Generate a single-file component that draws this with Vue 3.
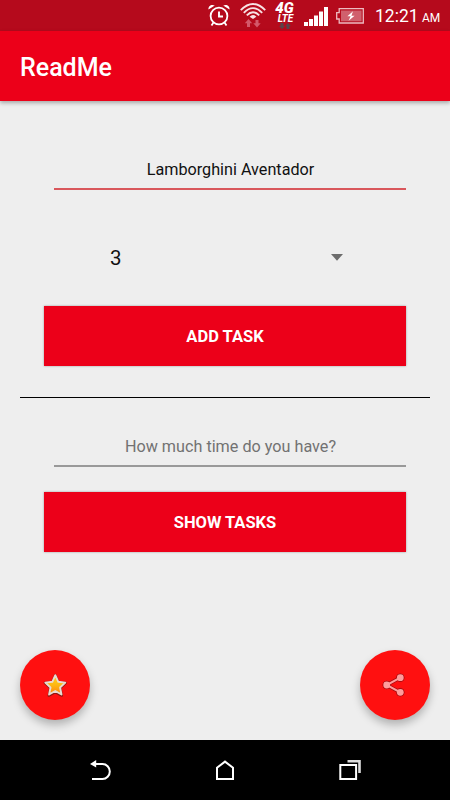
<template>
  <div class="screen">
    <!-- Status Bar -->
    <header class="status-bar">
      <svg class="alarm-icon" width="22" height="24" viewBox="0 0 22 24" fill="none" stroke="#fff">
        <circle cx="11" cy="13" r="8.4" stroke-width="1.8" />
        <path d="M11 8.500v5h4" stroke-width="1.900" />
        <path d="M.500 6.500C0 3 3.500 1 6.800 2.600zM21.500 6.500C22 3 18.500 1 15.200 2.600z" fill="#fff" stroke="none" />
        <path d="M5.500 19.500L3.500 22.500M16.500 19.500L18.500 22.500" stroke-width="1.800" />
      </svg>
      <svg class="wifi-icon" width="26" height="26" viewBox="0 0 26 26" fill="none" stroke="#f8e2e4" stroke-width="1.900">
        <path d="M.800 8.200Q13-4.200 25.200 8.200" />
        <path d="M3.800 10.800Q13 1.400 22.200 10.800" />
        <path d="M6.800 13.400Q13 7 19.200 13.400" />
        <path d="M9.600 14.800Q13 11.400 16.400 14.800L13 17z" fill="#f8e2e4" stroke="none" />
        <path d="M8.500 17l-3.700 4.300h2.200v3.700h3v-3.700h2.200zM17 25.500l-3.700-4.300h2.200V18h3v3.200h2.200z" fill="#d4586a" stroke="none" />
      </svg>
      <div class="network">
        <span class="network-gen">4G</span>
        <span class="network-type">LTE</span>
        <svg width="12" height="6" viewBox="0 0 12 6" fill="#5a4248">
          <path d="M3 6L0 3h1.500V0h3v3H6zM9 0L6 3h1.500v3h3V3H12z" />
        </svg>
      </div>
      <svg class="signal-icon" width="24" height="19" viewBox="0 0 24 19" fill="#fff">
        <rect x="0" y="15" width="4" height="4" />
        <rect x="5" y="12" width="4" height="7" />
        <rect x="10" y="8.500" width="4" height="10.500" />
        <rect x="15" y="4.500" width="4" height="14.500" />
        <rect x="20" y="0" width="4" height="19" />
      </svg>
      <svg class="battery-icon" width="28" height="16" viewBox="0 0 28 16">
        <path d="M3.200.700H27.300V15H3.200V11H.700V4.700H3.200z" fill="none" stroke="#edbac0" stroke-width="1.300" />
        <rect x="5" y="2.500" width="20.600" height="10.800" fill="#d0606d" />
        <path d="M17 3.200l-5.600 5h3.200L12.600 12.800l6-5h-3.200z" fill="#fff" />
      </svg>
      <span class="clock">12:21</span>
      <span class="meridiem">AM</span>
    </header>

    <!-- App Bar -->
    <div class="app-bar">
      <h1>ReadMe</h1>
    </div>

    <!-- Task Form -->
    <main class="content">
      <input v-model="taskName" class="field field-task" type="text" />

      <div class="spinner">
        <span>{{ duration }}</span>
        <svg width="12" height="7" viewBox="0 0 12 7">
          <path d="M0 0h12L6 6.800z" fill="#6c6c6c" />
        </svg>
      </div>

      <button class="btn">ADD TASK</button>

      <div class="divider"></div>

      <input v-model="timeAvailable" class="field field-time" type="text" placeholder="How much time do you have?" />

      <button class="btn">SHOW TASKS</button>

      <!-- Floating Actions -->
      <div class="fab-row">
        <button class="fab" aria-label="Favourite">
          <svg width="26" height="26" viewBox="0 0 26 26">
            <defs>
              <linearGradient id="star-fill" x1="0" y1="0" x2="0" y2="1">
                <stop offset="0" stop-color="#ffd21c" />
                <stop offset="0.500" stop-color="#fdb913" />
                <stop offset="1" stop-color="#ff8010" />
              </linearGradient>
            </defs>
            <path d="M13.300 3.200l3.100 6.800 7.400.900-5.400 5.100 1.400 7.600-6.500-3.500-6.500 3.500 1.400-7.600-5.400-5.100 7.400-.900z" fill="#7d1a14" stroke="#8f1712" stroke-width="2.400" stroke-linejoin="round" />
            <path d="M13.300 3.200l3 6.600 7 .800-5.200 4.900 1.400 7-6.200-3.500-6.200 3.500 1.400-7-5.200-4.900 7-.800z" fill="url(#star-fill)" stroke="#e8dcd2" stroke-width="1.900" stroke-linejoin="round" />
          </svg>
        </button>
        <button class="fab" aria-label="Share">
          <svg width="26" height="26" viewBox="0 0 26 26">
            <g fill="#a50c10" stroke="#a50c10">
              <path d="M18.300 5.700L4.700 13l13.600 7.300" fill="none" stroke-width="3.600" />
              <circle cx="18.300" cy="5.700" r="3.800" />
              <circle cx="4.700" cy="13" r="3.800" />
              <circle cx="18.300" cy="20.300" r="3.800" />
            </g>
            <g fill="#ff9c9c">
              <path d="M18.300 5.700L4.700 13l13.600 7.300" fill="none" stroke="#ff9c9c" stroke-width="2" />
              <circle cx="18.300" cy="5.700" r="3.400" />
              <circle cx="4.700" cy="13" r="3.400" />
              <circle cx="18.300" cy="20.300" r="3.400" />
            </g>
          </svg>
        </button>
      </div>
    </main>

    <!-- Navigation Bar -->
    <nav class="nav-bar">
      <svg width="22" height="20" viewBox="0 0 22 20" fill="none" stroke="#fff" stroke-width="2">
        <path d="M6 4h7.500a7.300 7.500 0 0 1 0 15H3" />
        <path d="M1 4L7.200 0v7.500z" fill="#fff" stroke="none" />
      </svg>
      <svg width="20" height="20" viewBox="0 0 20 20" fill="none" stroke="#fff" stroke-width="2">
        <path d="M2 19V7.800l8-6.200 8 6.200V19z" />
      </svg>
      <svg width="22" height="20" viewBox="0 0 22 20" fill="none" stroke="#fff" stroke-width="2">
        <rect x="1.300" y="5" width="15.800" height="14" />
        <path d="M8.500 1.300h12V13" stroke="#ddd" stroke-width="2.600" />
      </svg>
    </nav>
  </div>
</template>

<script setup>
import { ref } from 'vue'

const taskName = ref('Lamborghini Aventador')
const duration = ref(3)
const timeAvailable = ref('')
</script>

<style>
body {
  margin: 0;
}
</style>

<style scoped>
.screen {
  width: 450px;
  height: 800px;
  display: flex;
  flex-direction: column;
  overflow: hidden;
  background-color: #eee;
  font-family: Roboto, sans-serif;
}

/* Status Bar */
.status-bar {
  height: 31px;
  flex-shrink: 0;
  box-sizing: border-box;
  padding-left: 208px;
  display: flex;
  align-items: flex-start;
  background-color: #b50a1c;
  color: #fff;
}

.alarm-icon {
  margin-top: 3px;
}

.wifi-icon {
  margin: 2px 0 0 10px;
}

.network {
  width: 21px;
  height: 28px;
  margin: 2px 0 0 8px;
  display: flex;
  flex-direction: column;
  align-items: center;
}

.network-gen {
  font-size: 15px;
  line-height: 13px;
  font-weight: 900;
  font-style: italic;
}

.network-type {
  margin-left: 2px;
  font-size: 10px;
  line-height: 8px;
  font-weight: 700;
  font-style: italic;
}

.network svg {
  flex-shrink: 0;
}

.signal-icon {
  margin: 7px 0 0 9px;
}

.battery-icon {
  margin: 8px 0 0 8px;
}

.clock {
  width: 47px;
  margin-left: 11px;
  font-size: 17.5px;
  line-height: 33px;
}

.meridiem {
  font-size: 12px;
  line-height: 36px;
}

/* App Bar */
.app-bar {
  height: 70px;
  flex-shrink: 0;
  display: flex;
  align-items: center;
  padding-left: 20px;
  background-color: #ec0019;
  box-shadow: 0 2px 4px rgba(0, 0, 0, 0.3);
}

h1 {
  margin: 4px 0 0;
  color: #fff;
  font-size: 25px;
  line-height: 30px;
  font-weight: 500;
}

/* Content */
.content {
  flex: 1;
  display: flex;
  flex-direction: column;
  padding: 49px 20px 20px;
}

.field {
  box-sizing: border-box;
  height: 40px;
  margin: 0 24px 0 34px;
  padding: 0 0 0 1px;
  border: 0;
  border-bottom: 2px solid #d9575c;
  outline: none;
  background: transparent;
  color: #111;
  font-family: inherit;
  font-size: 16.2px;
  text-align: center;
}

.field-time {
  height: 38px;
  margin-top: 31px;
  margin-bottom: 25px;
  padding-bottom: 2px;
  border-bottom-color: #999;
}

.field::placeholder {
  color: #727272;
  opacity: 1;
}

.spinner {
  height: 58px;
  margin: 38px 87px 20px 90px;
  display: flex;
  align-items: center;
  justify-content: space-between;
  color: #111;
  font-size: 20.5px;
}

.spinner span {
  padding-top: 2px;
}

.btn {
  height: 60px;
  flex-shrink: 0;
  margin: 0 24px;
  padding: 0;
  border: 0;
  background-color: #ec0019;
  box-shadow: 0 0 2px rgba(0, 0, 0, 0.35);
  color: #fff;
  font-family: inherit;
  font-size: 16.5px;
  font-weight: 700;
}

.divider {
  height: 1px;
  margin-top: 31px;
  background-color: #000;
}

/* Floating Actions */
.fab-row {
  margin-top: auto;
  display: flex;
  justify-content: space-between;
}

.fab {
  width: 70px;
  height: 70px;
  padding: 0;
  border: 0;
  border-radius: 50%;
  display: flex;
  align-items: center;
  justify-content: center;
  background-color: #ff1010;
  box-shadow: 0 5px 9px rgba(0, 0, 0, 0.25);
}

/* Navigation Bar */
.nav-bar {
  height: 60px;
  flex-shrink: 0;
  box-sizing: border-box;
  padding: 0 89px;
  display: flex;
  align-items: center;
  justify-content: space-between;
  background-color: #000;
}
</style>
